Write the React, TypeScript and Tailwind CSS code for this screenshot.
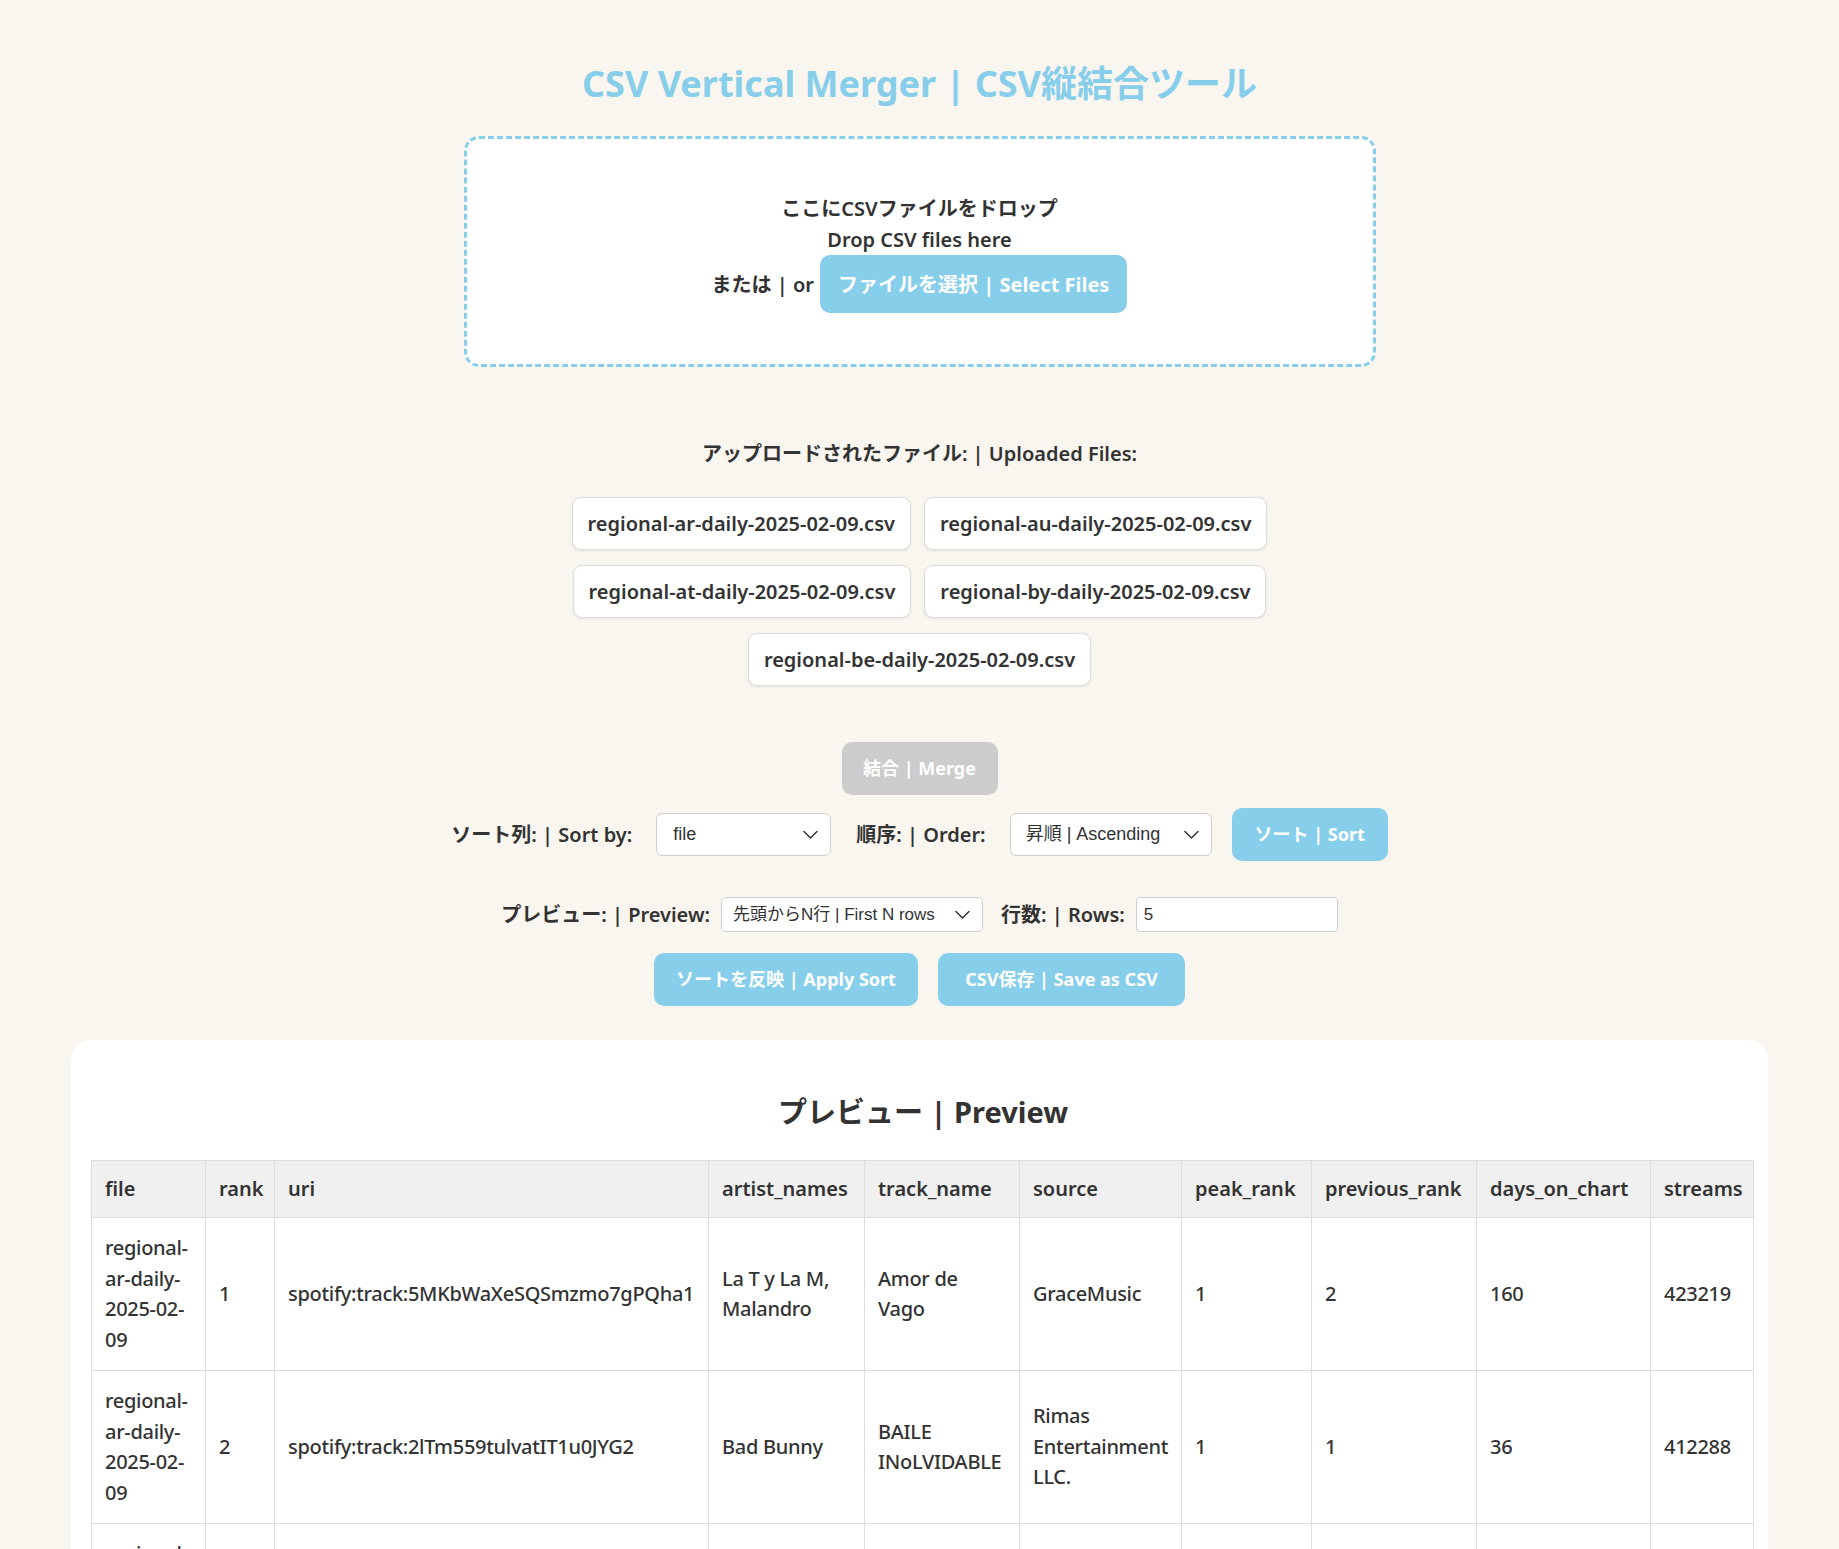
import { useState } from "react";

const files = [
  "regional-ar-daily-2025-02-09.csv",
  "regional-au-daily-2025-02-09.csv",
  "regional-at-daily-2025-02-09.csv",
  "regional-by-daily-2025-02-09.csv",
  "regional-be-daily-2025-02-09.csv",
];

const columns = [
  { key: "file", width: 114 },
  { key: "rank", width: 69 },
  { key: "uri", width: 434 },
  { key: "artist_names", width: 156 },
  { key: "track_name", width: 155 },
  { key: "source", width: 162 },
  { key: "peak_rank", width: 130 },
  { key: "previous_rank", width: 165 },
  { key: "days_on_chart", width: 174 },
  { key: "streams", width: 103 },
];

const rows = [
  [
    "regional-ar-daily-2025-02-09",
    "1",
    "spotify:track:5MKbWaXeSQSmzmo7gPQha1",
    "La T y La M, Malandro",
    "Amor de Vago",
    "GraceMusic",
    "1",
    "2",
    "160",
    "423219",
  ],
  [
    "regional-ar-daily-2025-02-09",
    "2",
    "spotify:track:2lTm559tulvatIT1u0JYG2",
    "Bad Bunny",
    "BAILE INoLVIDABLE",
    "Rimas Entertainment LLC.",
    "1",
    "1",
    "36",
    "412288",
  ],
  [
    "regional-ar-daily-2025-02-09",
    "3",
    "spotify:track:3sK8wGT43QFpWrvNQsrQya",
    "Bad Bunny",
    "DtMF",
    "Rimas Entertainment LLC.",
    "1",
    "3",
    "36",
    "398127",
  ],
  [
    "regional-ar-daily-2025-02-09",
    "4",
    "spotify:track:6fTdcGsjxlAD9PSkoPaLMX",
    "Emilia, Tini, Nicki Nicole",
    "Intoxicao",
    "Sony Music Entertainment",
    "2",
    "4",
    "58",
    "301452",
  ],
  [
    "regional-ar-daily-2025-02-09",
    "5",
    "spotify:track:4l5l3HCBAgQpUIsj1ZtKvA",
    "Milo j",
    "Rara Vez",
    "Bohemian Groove",
    "1",
    "5",
    "412",
    "287006",
  ],
];

function Chevron() {
  return (
    <svg
      className="pointer-events-none absolute right-[13px] top-1/2 -translate-y-1/2"
      width="15"
      height="9"
      viewBox="0 0 15 9"
      fill="none"
    >
      <polyline
        points="1,1 7.5,7.5 14,1"
        stroke="#333"
        strokeWidth="1.5"
        strokeLinecap="round"
        strokeLinejoin="round"
      />
    </svg>
  );
}

export default function App() {
  const [sortBy, setSortBy] = useState("file");
  const [order, setOrder] = useState("asc");
  const [mode, setMode] = useState("head");
  const [count, setCount] = useState("5");

  return (
    <div className="min-h-screen bg-[#f9f5ef] pt-[62px] pb-10 font-['Noto_Sans','Noto_Sans_CJK_JP',sans-serif] text-[20px] text-[#333]">
      <h1 className="text-center text-[36px] font-bold leading-[43px] text-[#87ceeb]">
        CSV Vertical Merger | CSV縦結合ツール
      </h1>

      <div className="mx-auto mt-[31px] w-[912px] rounded-[15px] border-[3px] border-dashed border-[#87ceeb] bg-white pt-[54px] pb-[51px] text-center font-semibold leading-[31px]">
        <p>ここにCSVファイルをドロップ</p>
        <p>Drop CSV files here</p>
        <div className="flex items-center justify-center gap-[6px]">
          <span>または | or</span>
          <button
            type="button"
            className="h-[58px] rounded-[10px] bg-[#87ceeb] px-[18px] font-bold text-white"
          >
            ファイルを選択 | Select Files
          </button>
        </div>
      </div>

      <p className="mt-[71px] text-center font-semibold leading-[32px]">
        アップロードされたファイル: | Uploaded Files:
      </p>

      <div className="mx-auto mt-[27px] flex w-[912px] flex-wrap justify-center gap-x-[13px] gap-y-[15px]">
        {files.map((name) => (
          <div
            key={name}
            className="flex h-[53px] items-center rounded-[9px] border border-[#dcdcdc] bg-white px-[15px] font-semibold shadow-[0_1px_3px_rgba(0,0,0,0.08)]"
          >
            {name}
          </div>
        ))}
      </div>

      <div className="mt-[56px] flex justify-center">
        <button
          type="button"
          disabled
          className="h-[53px] w-[156px] rounded-[10px] bg-[#cccccc] text-[18px] font-bold text-white"
        >
          結合 | Merge
        </button>
      </div>

      <div className="mt-[13px] flex items-center justify-center">
        <span className="mr-[24px] font-semibold">ソート列: | Sort by:</span>
        <div className="relative mr-[25px]">
          <select
            value={sortBy}
            onChange={(e) => setSortBy(e.target.value)}
            className="h-[43px] w-[175px] appearance-none rounded-[6px] border border-[#cfcfcf] bg-white pl-[16px] font-['Liberation_Sans','Noto_Sans_CJK_JP',sans-serif] text-[18px]"
          >
            {columns.map((c) => (
              <option key={c.key} value={c.key}>
                {c.key}
              </option>
            ))}
          </select>
          <Chevron />
        </div>
        <span className="mr-[24px] font-semibold">順序: | Order:</span>
        <div className="relative mr-[20px]">
          <select
            value={order}
            onChange={(e) => setOrder(e.target.value)}
            className="h-[43px] w-[202px] appearance-none rounded-[6px] border border-[#cfcfcf] bg-white pl-[15px] font-['Liberation_Sans','Noto_Sans_CJK_JP',sans-serif] text-[18px]"
          >
            <option value="asc">昇順 | Ascending</option>
            <option value="desc">降順 | Descending</option>
          </select>
          <Chevron />
        </div>
        <button
          type="button"
          className="h-[53px] w-[156px] rounded-[10px] bg-[#87ceeb] text-[18px] font-bold text-white"
        >
          ソート | Sort
        </button>
      </div>

      <div className="mt-[36px] flex items-center justify-center">
        <span className="mr-[11px] font-semibold">プレビュー: | Preview:</span>
        <div className="relative mr-[18px]">
          <select
            value={mode}
            onChange={(e) => setMode(e.target.value)}
            className="h-[35px] w-[262px] appearance-none rounded-[5px] border border-[#cfcfcf] bg-white pl-[11px] font-['Liberation_Sans','Noto_Sans_CJK_JP',sans-serif] text-[17px]"
          >
            <option value="head">先頭からN行 | First N rows</option>
            <option value="tail">末尾からN行 | Last N rows</option>
          </select>
          <Chevron />
        </div>
        <span className="mr-[11px] font-semibold">行数: | Rows:</span>
        <input
          value={count}
          onChange={(e) => setCount(e.target.value)}
          className="h-[35px] w-[202px] rounded-[4px] border border-[#cfcfcf] bg-white px-[7px] font-['Liberation_Sans',sans-serif] text-[17px]"
        />
      </div>

      <div className="mt-[21px] flex justify-center gap-[20px]">
        <button
          type="button"
          className="h-[53px] w-[264px] rounded-[10px] bg-[#87ceeb] text-[18px] font-bold text-white"
        >
          ソートを反映 | Apply Sort
        </button>
        <button
          type="button"
          className="h-[53px] w-[247px] rounded-[10px] bg-[#87ceeb] text-[18px] font-bold text-white"
        >
          CSV保存 | Save as CSV
        </button>
      </div>

      <section className="mx-[71px] mt-[34px] rounded-[20px] bg-white pt-[52px] pr-[13px] pb-5 pl-5">
        <h2 className="mb-[28px] text-center text-[29px] font-bold leading-[40px]">
          プレビュー | Preview
        </h2>
        <table className="w-[1662px] table-fixed border-collapse text-left">
          <colgroup>
            {columns.map((c) => (
              <col key={c.key} style={{ width: c.width }} />
            ))}
          </colgroup>
          <thead>
            <tr className="bg-[#f0f0f0]">
              {columns.map((c) => (
                <th
                  key={c.key}
                  className="border border-[#dddddd] px-[13px] py-[13px] font-semibold leading-[30px]"
                >
                  {c.key}
                </th>
              ))}
            </tr>
          </thead>
          <tbody>
            {rows.map((row, i) => (
              <tr key={i}>
                {row.map((cell, j) => (
                  <td
                    key={j}
                    className="border border-[#dddddd] px-[13px] py-[15px] align-middle font-medium leading-[30.5px] tracking-[-0.3px]"
                  >
                    {cell}
                  </td>
                ))}
              </tr>
            ))}
          </tbody>
        </table>
      </section>
    </div>
  );
}
